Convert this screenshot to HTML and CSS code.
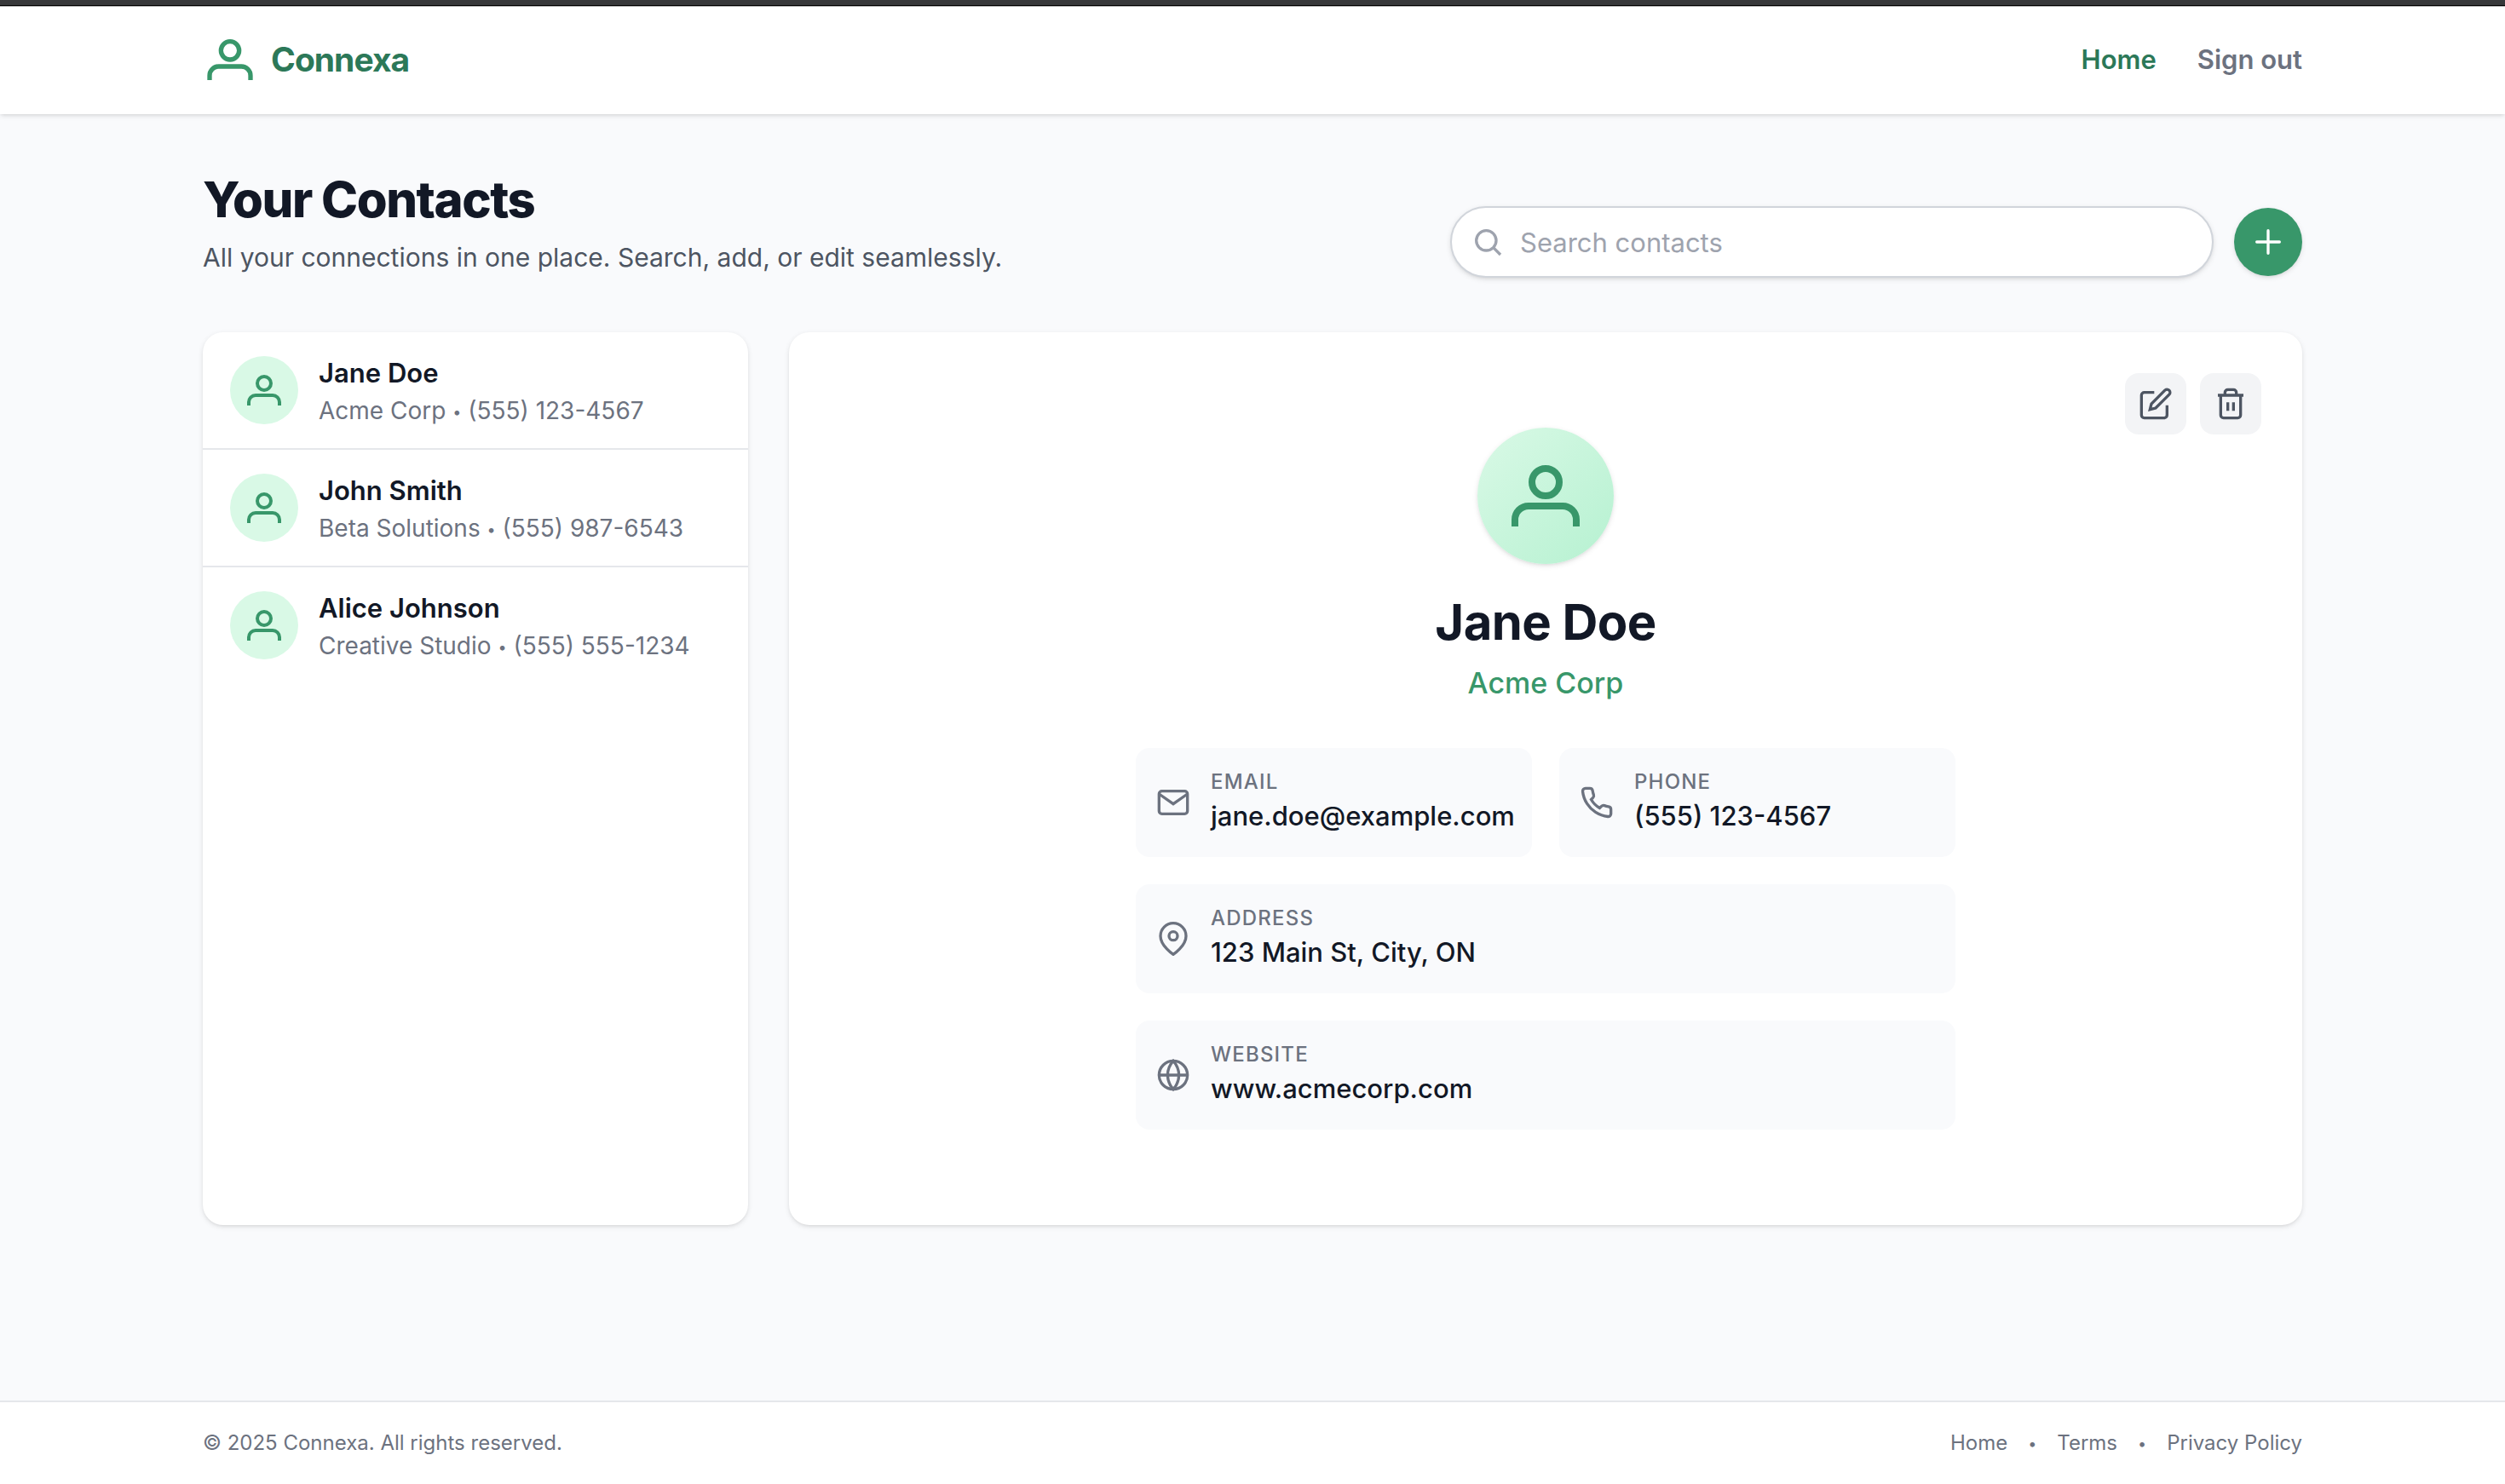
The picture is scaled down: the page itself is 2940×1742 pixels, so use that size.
FILE: index.html
```html
<!DOCTYPE html>
<html lang="en">
<head>
<meta charset="utf-8">
<meta name="viewport" content="width=device-width, initial-scale=1">
<title>Connexa</title>
<link rel="stylesheet" href="styles.css">
</head>
<body>
<svg width="0" height="0" class="sprite" aria-hidden="true">
  <symbol id="user" viewBox="0 0 24 24"><circle cx="12" cy="8" r="4"/><path d="M3 21v-2a4 4 0 0 1 4-4h10a4 4 0 0 1 4 4v2"/></symbol>
  <symbol id="search" viewBox="0 0 24 24"><circle cx="11" cy="11" r="7"/><path d="M21 21l-5-5"/></symbol>
  <symbol id="plus" viewBox="0 0 24 24"><path d="M12 4v16M4 12h16" stroke-linecap="round"/></symbol>
  <symbol id="edit" viewBox="0 0 24 24"><path d="M11 4H4a2 2 0 0 0-2 2v14a2 2 0 0 0 2 2h14a2 2 0 0 0 2-2v-7"/><path d="M18.5 2.5a2.121 2.121 0 0 1 3 3L12 15l-4 1 1-4 9.5-9.5z"/></symbol>
  <symbol id="trash" viewBox="0 0 24 24"><path d="M3 6h18M19 6v14a2 2 0 0 1-2 2H7a2 2 0 0 1-2-2V6m3 0V4a2 2 0 0 1 2-2h4a2 2 0 0 1 2 2v2M10 11v6M14 11v6"/></symbol>
  <symbol id="mail" viewBox="0 0 24 24"><rect x="2" y="4" width="20" height="16" rx="2"/><path d="M22 6l-10 7L2 6"/></symbol>
  <symbol id="phone" viewBox="0 0 24 24"><path d="M22 16.92v3a2 2 0 0 1-2.18 2 19.79 19.79 0 0 1-8.63-3.07 19.5 19.5 0 0 1-6-6 19.79 19.79 0 0 1-3.07-8.67A2 2 0 0 1 4.11 2h3a2 2 0 0 1 2 1.72c.13.96.36 1.9.7 2.81a2 2 0 0 1-.45 2.11L8.09 9.91a16 16 0 0 0 6 6l1.27-1.27a2 2 0 0 1 2.11-.45c.91.34 1.85.57 2.81.7A2 2 0 0 1 22 16.92z"/></symbol>
  <symbol id="pin" viewBox="0 0 24 24"><path d="M21 10c0 7-9 13-9 13s-9-6-9-13a9 9 0 0 1 18 0z" stroke-linejoin="round"/><circle cx="12" cy="10" r="3"/></symbol>
  <symbol id="globe" viewBox="0 0 24 24"><circle cx="12" cy="12" r="10"/><path d="M2 12h20M12 2a15.3 15.3 0 0 1 4 10 15.3 15.3 0 0 1-4 10 15.3 15.3 0 0 1-4-10 15.3 15.3 0 0 1 4-10z"/></symbol>
</svg>
<div class="page">
  <div class="window-edge"></div>
  <header class="site-header">
    <div class="container bar">
      <a class="brand" href="#"><svg class="icon icon-lg"><use href="#user"/></svg><span>Connexa</span></a>
      <nav class="nav">
        <a class="active" href="#">Home</a>
        <a href="#">Sign out</a>
      </nav>
    </div>
  </header>

  <main class="container main">
    <div class="intro">
      <div>
        <h1>Your Contacts</h1>
        <p>All your connections in one place. Search, add, or edit seamlessly.</p>
      </div>
      <div class="tools">
        <div class="search">
          <svg class="icon search-icon"><use href="#search"/></svg>
          <input type="search" placeholder="Search contacts" aria-label="Search contacts">
        </div>
        <button class="add" type="button" aria-label="Add contact"><svg class="icon"><use href="#plus"/></svg></button>
      </div>
    </div>

    <div class="panels">
      <ul class="panel contacts">
        <li><button class="contact" type="button"><span class="avatar"><svg class="icon icon-md"><use href="#user"/></svg></span><span class="who"><span class="name">Jane Doe</span><span class="meta">Acme Corp <span class="dot">•</span> (555) 123-4567</span></span></button></li>
        <li><button class="contact" type="button"><span class="avatar"><svg class="icon icon-md"><use href="#user"/></svg></span><span class="who"><span class="name">John Smith</span><span class="meta">Beta Solutions <span class="dot">•</span> (555) 987-6543</span></span></button></li>
        <li><button class="contact" type="button"><span class="avatar"><svg class="icon icon-md"><use href="#user"/></svg></span><span class="who"><span class="name">Alice Johnson</span><span class="meta">Creative Studio <span class="dot">•</span> (555) 555-1234</span></span></button></li>
      </ul>

      <section class="panel profile">
        <div class="actions">
          <button type="button" aria-label="Edit contact"><svg class="icon"><use href="#edit"/></svg></button>
          <button type="button" aria-label="Delete contact"><svg class="icon"><use href="#trash"/></svg></button>
        </div>
        <div class="portrait"><svg class="icon icon-xl"><use href="#user"/></svg></div>
        <h2>Jane Doe</h2>
        <p class="company">Acme Corp</p>
        <dl class="details">
          <div class="field"><svg class="icon"><use href="#mail"/></svg><div><dt>EMAIL</dt><dd>jane.doe@example.com</dd></div></div>
          <div class="field"><svg class="icon"><use href="#phone"/></svg><div><dt>PHONE</dt><dd>(555) 123-4567</dd></div></div>
          <div class="field wide"><svg class="icon"><use href="#pin"/></svg><div><dt>ADDRESS</dt><dd>123 Main St, City, ON</dd></div></div>
          <div class="field wide"><svg class="icon"><use href="#globe"/></svg><div><dt>WEBSITE</dt><dd>www.acmecorp.com</dd></div></div>
        </dl>
      </section>
    </div>
  </main>

  <footer class="site-footer">
    <div class="container bar">
      <span>© 2025 Connexa. All rights reserved.</span>
      <nav class="legal">
        <a href="#">Home</a><span><span class="dot">•</span></span><a href="#">Terms</a><span><span class="dot">•</span></span><a href="#">Privacy Policy</a>
      </nav>
    </div>
  </footer>
</div>
</body>
</html>
```
FILE: styles.css
```css
:root {
  --green: #38976a;
  --green-dark: #2c7858;
  --ink: #121826;
  --gray-600: #4d5562;
  --gray-500: #6c727f;
  --gray-400: #9ea3ae;
  --line: #e5e7eb;
  --surface: #f9fafc;
  --shadow: 0 2px 6px rgba(0, 0, 0, 0.1), 0 2px 4px -2px rgba(0, 0, 0, 0.1);
}

*, *::before, *::after { box-sizing: border-box; }

body, h1, h2, p, ul, dl, dd { margin: 0; padding: 0; }

body {
  background: var(--surface);
  color: var(--ink);
  font: 400 31px/48px Inter, "Liberation Sans", sans-serif;
}

a { color: inherit; text-decoration: none; }

button {
  border: 0;
  padding: 0;
  font: inherit;
  color: inherit;
  background: none;
  cursor: pointer;
}

.sprite { position: absolute; }

.icon {
  width: 40px;
  height: 40px;
  flex: none;
  display: block;
  fill: none;
  stroke: currentColor;
  stroke-width: 2;
}
.icon-md { width: 48px; height: 48px; }
.icon-lg { width: 64px; height: 64px; }
.icon-xl { width: 96px; height: 96px; }

.dot {
  font-size: 18px;
  line-height: 1;
  vertical-align: middle;
}

.page {
  min-height: 100vh;
  display: flex;
  flex-direction: column;
}

/* dark strip along the top, its two hairlines lie over the header */
.window-edge {
  height: 6px;
  background: #37383a;
  box-shadow: 0 1px #000, 0 2px #b4b4b4;
  position: relative;
  z-index: 1;
}

.container {
  width: 100%;
  max-width: 2560px;
  margin: 0 auto;
  padding: 0 48px;
}

.bar {
  display: flex;
  align-items: center;
  justify-content: space-between;
}

.site-header { background: #fff; box-shadow: var(--shadow); }
.site-header .bar { padding-top: 32px; padding-bottom: 32px; }

.brand {
  display: flex;
  align-items: center;
  gap: 16px;
  color: var(--green-dark);
  font-size: 39px;
  font-weight: 700;
  letter-spacing: -0.025em;
}
.brand .icon { color: var(--green); }

.nav {
  display: flex;
  gap: 48px;
  font-weight: 600;
  color: var(--gray-500);
}
.nav .active { color: var(--green-dark); }

.main {
  flex: 1;
  display: flex;
  flex-direction: column;
  gap: 64px;
  padding-top: 64px;
  padding-bottom: 206px;
}

.intro {
  display: flex;
  align-items: flex-end;
  justify-content: space-between;
}

h1 {
  font-size: 58px;
  line-height: 72px;
  font-weight: 800;
  letter-spacing: -0.025em;
}
.intro p { margin-top: 8px; font-size: 30px; color: var(--gray-600); }

.tools { display: flex; align-items: center; gap: 24px; }

.search { position: relative; width: 896px; }
.search-icon {
  position: absolute;
  left: 24px;
  top: 22px;
  color: var(--gray-400);
}
.search input {
  display: block;
  width: 100%;
  height: 84px;
  padding: 16px 32px 16px 80px;
  border: 2px solid #d1d5db;
  border-radius: 42px;
  background: #fff;
  box-shadow: var(--shadow);
  font: inherit;
  color: inherit;
  appearance: none;
}
.search input::placeholder { color: var(--gray-400); opacity: 1; }

.add {
  width: 80px;
  height: 80px;
  display: grid;
  place-items: center;
  border-radius: 50%;
  background: var(--green);
  color: #fff;
  box-shadow: var(--shadow);
}

.panels {
  flex: 1;
  display: grid;
  grid-template-columns: 640px 1fr;
  gap: 48px;
}
.panel {
  background: #fff;
  border-radius: 24px;
  box-shadow: var(--shadow);
}

.contacts { list-style: none; overflow: hidden; }
.contacts li + li { border-top: 2px solid var(--line); }
.contact {
  width: 100%;
  display: flex;
  align-items: center;
  gap: 24px;
  padding: 24px 32px;
  text-align: left;
}
.avatar {
  width: 80px;
  height: 80px;
  flex: none;
  display: grid;
  place-items: center;
  border-radius: 50%;
  background: #d9f9e6;
  color: var(--green);
}
.name, .meta { display: block; }
.name { font-weight: 600; }
.meta { font-size: 28px; line-height: 40px; color: var(--gray-500); }

.profile {
  position: relative;
  display: flex;
  flex-direction: column;
  align-items: center;
  padding: 112px 48px 48px;
}
.actions {
  position: absolute;
  top: 48px;
  right: 48px;
  display: flex;
  gap: 16px;
}
.actions button {
  padding: 16px;
  border-radius: 16px;
  background: #f3f4f6;
  color: var(--gray-600);
}
.portrait {
  width: 160px;
  height: 160px;
  display: grid;
  place-items: center;
  border-radius: 50%;
  background: linear-gradient(to bottom right, #d9f9e6, #b6f1d1);
  color: var(--green);
  box-shadow: var(--shadow);
}
h2 {
  margin-top: 32px;
  font-size: 58px;
  line-height: 72px;
  font-weight: 700;
  letter-spacing: -0.01em;
}
.company {
  margin-top: 8px;
  font-size: 34px;
  line-height: 56px;
  font-weight: 500;
  color: var(--green);
}
.details {
  width: 100%;
  max-width: 962px;
  margin-top: 48px;
  display: grid;
  grid-template-columns: repeat(2, minmax(0, 1fr));
  gap: 32px;
}
.field {
  display: flex;
  align-items: center;
  gap: 24px;
  padding: 24px;
  border-radius: 16px;
  background: var(--surface);
}
.field .icon { color: var(--gray-500); }
.wide { grid-column: span 2; }
dt {
  font-size: 24px;
  line-height: 32px;
  font-weight: 500;
  letter-spacing: 0.05em;
  color: var(--gray-500);
}
dd { font-weight: 500; }

.site-footer {
  background: #fff;
  border-top: 2px solid var(--line);
  color: var(--gray-500);
  font-size: 24px;
  line-height: 32px;
}
.site-footer .bar { padding-top: 32px; padding-bottom: 32px; }
.legal { display: flex; gap: 24px; }
```
